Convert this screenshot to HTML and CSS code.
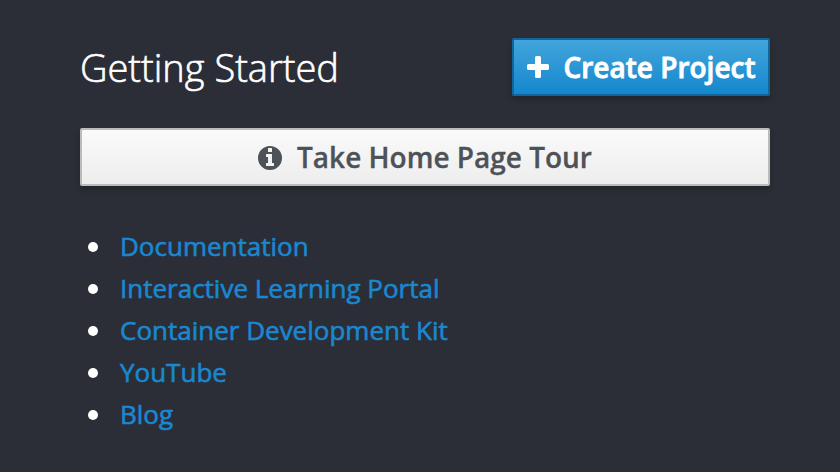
FILE: index.html
```html
<!DOCTYPE html>
<html lang="en">
<head>
<meta charset="utf-8">
<title>Getting Started</title>
<link rel="stylesheet" href="styles.css">
</head>
<body>
<main class="panel">
  <header class="header">
    <h1 class="title">Getting Started</h1>
    <button class="btn btn-primary">
      <svg class="icon-plus" viewBox="0 0 22 22" aria-hidden="true"><path d="M9.500 0h3q1.500 0 1.500 1.500V8h6.500q1.500 0 1.500 1.500v3q0 1.500-1.500 1.500H14v6.500q0 1.500-1.500 1.500h-3q-1.500 0-1.500-1.500V14H1.500Q0 14 0 12.500v-3Q0 8 1.500 8H8V1.500Q8 0 9.500 0z"/></svg>
      <span class="create-label">Create Project</span>
    </button>
  </header>
  <button class="btn btn-default">
    <svg class="icon-info" viewBox="0 0 24 24" aria-hidden="true"><path fill-rule="evenodd" d="M12 0a12 12 0 1 0 0 24a12 12 0 0 0 0-24zM10.500 2h3q.5 0 .5.500v3q0 .5-.5.500h-3q-.5 0-.5-.5v-3q0-.5.5-.5zM8.500 8h5q.5 0 .5.500V17h1.500q.5 0 .5.500v2q0 .5-.5.500h-7q-.5 0-.5-.5v-2q0-.5.500-.5H10v-6H8.500q-.5 0-.5-.5v-2q0-.5.5-.5z"/></svg>
    <span class="tour-label">Take Home Page Tour</span>
  </button>
  <ul class="links">
    <li><a href="#">Documentation</a></li>
    <li><a href="#">Interactive Learning Portal</a></li>
    <li><a href="#">Container Development Kit</a></li>
    <li><a href="#">YouTube</a></li>
    <li><a href="#">Blog</a></li>
  </ul>
</main>
</body>
</html>
```
FILE: styles.css
```css
* { box-sizing: border-box; }
body {
  margin: 0;
  height: 472px;
  overflow: hidden;
  background: #2b2e36;
  color: #fff;
  font-family: "Open Sans", sans-serif;
}
.panel { padding: 38px 70px 0 80px; }
.header {
  display: flex;
  justify-content: space-between;
  align-items: center;
  height: 58px;
}
.title {
  margin: 0;
  font-size: 38px;
  font-weight: 300;
  line-height: 58px;
  -webkit-text-stroke: 0.6px currentColor;
}
.btn {
  display: flex;
  align-items: center;
  justify-content: center;
  height: 58px;
  padding: 0;
  border: 2px solid;
  border-radius: 2px;
  font: 600 28px/54px "Open Sans", sans-serif;
  white-space: nowrap;
  box-shadow: 0 4px 6px rgba(3, 3, 3, 0.2);
}
.btn svg { fill: currentColor; flex: none; }
.btn-primary {
  width: 258px;
  gap: 15px;
  color: #fff;
  border-color: #10659c;
  background: linear-gradient(#42a5db, #1587ce);
}
.create-label { -webkit-text-stroke: 0.8px currentColor; }
.btn-default {
  width: 100%;
  margin-top: 32px;
  gap: 15px;
  color: #4d5258;
  border-color: #bbb;
  background: linear-gradient(#fafafa, #ededed);
}
.tour-label { -webkit-text-stroke: 0.3px currentColor; }
.icon-plus { width: 22px; height: 22px; }
.icon-info { width: 24px; height: 24px; margin-top: 2px; }
.links {
  margin: 39px 0 0;
  padding: 0 0 0 8px;
  font-size: 26px;
  line-height: 42px;
  list-style: none;
}
.links li { display: flex; align-items: center; gap: 22px; height: 42px; }
.links li::before {
  content: "";
  width: 10px;
  height: 10px;
  margin-top: 2px;
  border-radius: 50%;
  background: #fff;
}
.links a {
  color: #1a87d0;
  text-decoration: none;
  -webkit-text-stroke: 0.6px currentColor;
}
```
